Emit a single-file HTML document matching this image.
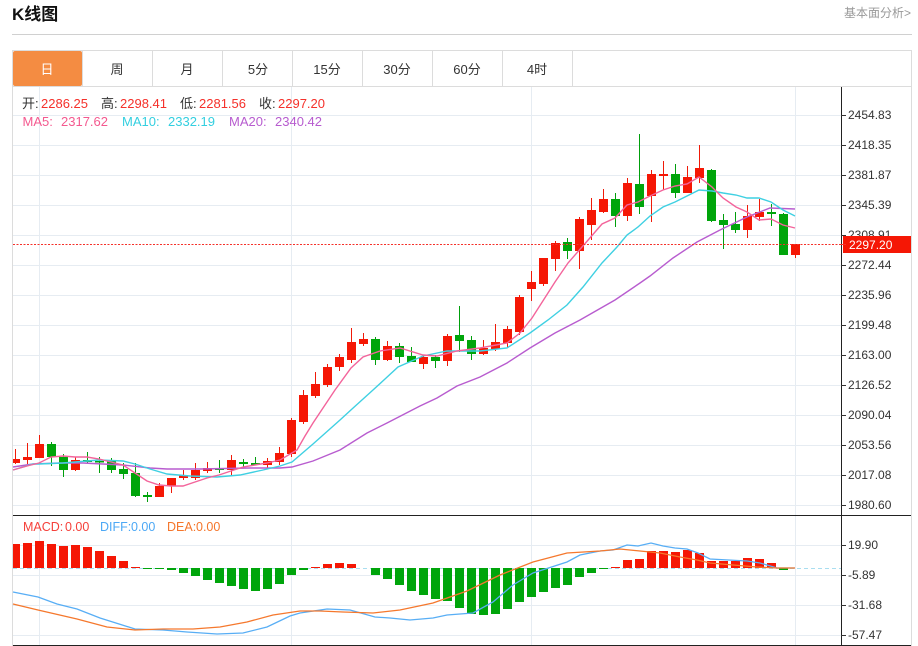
<!DOCTYPE html>
<html><head><meta charset="utf-8"><title>K线图</title>
<style>
html,body{margin:0;padding:0;background:#fff;width:918px;height:646px;overflow:hidden}
svg{position:absolute;left:0;top:0;display:block}
text{font-family:"Liberation Sans","Noto Sans CJK SC",sans-serif}
</style></head><body>
<svg width="918" height="646" viewBox="0 0 918 646" xmlns="http://www.w3.org/2000/svg">
<text x="12" y="20" font-size="17" font-weight="700" fill="#111">K线图</text>
<text x="911" y="17" font-size="12" fill="#999" text-anchor="end">基本面分析&gt;</text>
<path d="M12 34.500H912" stroke="#d0d0d0" fill="none"/>

<path d="M12.500 50V646M911.500 50V646M12 50.500H912M12 86.500H912M82.500 51V86M152.500 51V86M222.500 51V86M292.500 51V86M362.500 51V86M432.500 51V86M502.500 51V86M572.500 51V86" stroke="#dcdcdc" fill="none"/>
<rect x="13" y="51" width="69" height="35" rx="2" fill="#f48c42"/>
<g font-size="13" text-anchor="middle" fill="#333">
<text x="47" y="74" fill="#fff">日</text><text x="117" y="74">周</text><text x="187" y="74">月</text><text x="258" y="74">5分</text><text x="327" y="74">15分</text><text x="397" y="74">30分</text><text x="467" y="74">60分</text><text x="537" y="74">4时</text>
</g>

<path d="M13 115.500H841M13 145.500H841M13 175.500H841M13 205.500H841M13 235.500H841M13 265.500H841M13 295.500H841M13 325.500H841M13 355.500H841M13 385.500H841M13 415.500H841M13 445.500H841M13 475.500H841M13 505.500H841M13 545.500H841M13 575.500H841M13 605.500H841M13 635.500H841M39.500 87V645M291.500 87V645M531.500 87V645M795.500 87V645" stroke="#e6ecf2" fill="none"/>

<g font-size="13">
<text x="22" y="108" fill="#333">开:</text><text x="41" y="108" fill="#f5302a">2286.25</text>
<text x="101" y="108" fill="#333">高:</text><text x="120" y="108" fill="#f5302a">2298.41</text>
<text x="180" y="108" fill="#333">低:</text><text x="199" y="108" fill="#f5302a">2281.56</text>
<text x="259" y="108" fill="#333">收:</text><text x="278" y="108" fill="#f5302a">2297.20</text>
<text x="22.500" y="126" fill="#f4598f">MA5:</text><text x="61" y="126" fill="#f4598f">2317.62</text>
<text x="122" y="126" fill="#33cfe0">MA10:</text><text x="168" y="126" fill="#33cfe0">2332.19</text>
<text x="229" y="126" fill="#b75ccf">MA20:</text><text x="275" y="126" fill="#b75ccf">2340.42</text>
<text x="23" y="531" font-size="12.500" fill="#f5403a">MACD:</text><text x="65" y="531" font-size="12.500" fill="#f5403a">0.00</text>
<text x="100" y="531" font-size="12.500" fill="#4ca8f5">DIFF:</text><text x="131" y="531" font-size="12.500" fill="#4ca8f5">0.00</text>
<text x="167" y="531" font-size="12.500" fill="#f5762b">DEA:</text><text x="196" y="531" font-size="12.500" fill="#f5762b">0.00</text>
</g>

<!-- red wicks -->
<path fill="none" stroke="#f01a08" d="M15.500 449V464M27.500 443V464M39.500 435V458M75.500 457V471M159.500 483V497M171.500 478V493M183.500 470V480M195.500 463V480M207.500 462V473M231.500 455V476M267.500 458V469M279.500 447V465M291.500 418V457M303.500 390V424M315.500 372V398M327.500 364V387M339.500 354V371M351.500 328V363M363.500 333V346M387.500 341V361M423.500 355V369M447.500 334V366M483.500 340V355M495.500 324V351M507.500 326V347M519.500 295V335M531.500 271V301M543.500 258V286M555.500 241V271M579.500 217V269M591.500 198V240M603.500 189V213M627.500 178V221M651.500 170V222M663.500 161V190M687.500 166V193M699.500 145V183M747.500 205V238M759.500 199V221M795.500 244V258"/>
<!-- green wicks -->
<path fill="none" stroke="#009f0c" d="M51.500 442V466M63.500 454V477M87.500 452V463M99.500 457V473M111.500 458V473M123.500 463V479M135.500 463V497M147.500 492V502M219.500 460V473M243.500 459V468M255.500 457V465M375.500 337V365M399.500 343V363M411.500 347V362M435.500 355V368M459.500 306V352M471.500 336V360M567.500 238V259M615.500 193V227M639.500 134V214M675.500 164V198M711.500 169V222M723.500 214V249M735.500 212V233M771.500 204V226M783.500 213V255"/>
<!-- red bodies -->
<path fill="#f51705" d="M13 459h7v4h-7zM23 457h9v3h-9zM35 444h9v14h-9zM71 460h9v10h-9zM155 486h9v11h-9zM167 478h9v8h-9zM179 475h9v3h-9zM191 470h9v8h-9zM203 468h9v3h-9zM227 460h9v10h-9zM263 461h9v4h-9zM275 453h9v9h-9zM287 420h9v34h-9zM299 395h9v27h-9zM311 384h9v12h-9zM323 367h9v18h-9zM335 357h9v10h-9zM347 342h9v18h-9zM359 339h9v5h-9zM383 346h9v14h-9zM419 357h9v7h-9zM443 336h9v25h-9zM479 348h9v6h-9zM491 342h9v7h-9zM503 329h9v14h-9zM515 297h9v35h-9zM527 282h9v7h-9zM539 258h9v26h-9zM551 243h9v16h-9zM575 219h9v32h-9zM587 210h9v15h-9zM599 199h9v13h-9zM623 183h9v33h-9zM647 174h9v22h-9zM659 174h9v2h-9zM683 177h9v16h-9zM695 168h9v10h-9zM743 216h9v14h-9zM755 212h9v5h-9zM791 244h9v11h-9z"/>
<!-- green bodies -->
<path fill="#00a50b" d="M47 444h9v13h-9zM59 457h9v13h-9zM83 460h9v2h-9zM95 461h9v1.500h-9zM107 461h9v9h-9zM119 469h9v5h-9zM131 473h9v23h-9zM143 495h9v2h-9zM215 468h9v2h-9zM239 462h9v2h-9zM251 463h9v2h-9zM371 339h9v21h-9zM395 346h9v11h-9zM407 356h9v6h-9zM431 357h9v4h-9zM455 335h9v6h-9zM467 340h9v14h-9zM563 242h9v9h-9zM611 199h9v17h-9zM635 184h9v23h-9zM671 174h9v19h-9zM707 170h9v51h-9zM719 220h9v5h-9zM731 224h9v6h-9zM767 212h9v2h-9zM779 214h9v41h-9z"/>

<!-- MA20 -->
<polyline fill="none" stroke="#b85ccf" stroke-width="1.400" points="13,467 33,464 60,463 83,463 123,465 150,468 167,469 200,469 250,468 280,468 292,467 313,461 340,450 367,433 387,423 420,406 437,398 457,386 480,377 507,363 530,348 555,333 580,320 615,300 640,283 650,276 673,258 697,242 720,230 747,217 770,208 795,209"/>
<!-- MA10 -->
<polyline fill="none" stroke="#3fd0e2" stroke-width="1.400" points="13,470 33,464 39,464 63,463 99,460 123,461 135,464 150,469 167,474 190,476 217,477 240,475 263,470 280,466 292,462 313,444 340,420 352,409 373,390 385,379 398,367 423,356 447,351 480,351 507,348 530,333 548,320 567,305 583,287 602,263 617,247 627,235 638,227 650,216 663,207 675,202 687,196 699,190 712,191 723,193 736,195 747,198 759,198 771,202 783,210 795,216"/>
<!-- MA5 -->
<polyline fill="none" stroke="#f3649b" stroke-width="1.400" points="13,470 27,466 39,463 51,457 63,456 75,457 87,457 99,459 111,462 123,465 135,473 147,481 159,485 171,486 183,486 195,482 207,478 219,475 231,471 243,467 255,465 267,463 280,460 297,450 305,436 313,423 335,390 351,368 363,357 380,351 400,348 423,355 437,356 457,351 480,348 507,343 520,333 532,318 555,282 568,263 589,239 602,224 615,218 627,205 638,202 650,196 663,190 675,186 687,184 699,177 712,187 723,198 736,207 747,212 759,220 771,219 783,225 795,228"/>

<!-- price line -->
<path d="M13 244.500H841" stroke="#f5302a" stroke-dasharray="2 1.500" fill="none"/>

<!-- MACD zero -->
<path d="M13 568.500H841" stroke="#a9def0" stroke-dasharray="4 3" fill="none"/>
<!-- MACD red -->
<path fill="#f51705" d="M13 544h7v24h-7zM23 543h9v25h-9zM35 541h9v27h-9zM47 544h9v24h-9zM59 546h9v22h-9zM71 545h9v23h-9zM83 547h9v21h-9zM95 551h9v17h-9zM107 556h9v12h-9zM119 561h9v7h-9zM131 567h9v1h-9zM311 567h9v1h-9zM323 564h9v4h-9zM335 563h9v5h-9zM347 564h9v4h-9zM611 567h9v1h-9zM623 560h9v8h-9zM635 559h9v9h-9zM647 551h9v17h-9zM659 551h9v17h-9zM671 552h9v16h-9zM683 550h9v18h-9zM695 553h9v15h-9zM707 561h9v7h-9zM719 561h9v7h-9zM731 561h9v7h-9zM743 558h9v10h-9zM755 559h9v9h-9zM767 563h9v5h-9z"/>
<!-- MACD green -->
<path fill="#00a50b" d="M143 568h9v1h-9zM155 568h9v1h-9zM167 568h9v2h-9zM179 568h9v5h-9zM191 568h9v8h-9zM203 568h9v12h-9zM215 568h9v15h-9zM227 568h9v18h-9zM239 568h9v21h-9zM251 568h9v23h-9zM263 568h9v21h-9zM275 568h9v16h-9zM287 568h9v7h-9zM299 568h9v2h-9zM371 568h9v7h-9zM383 568h9v11h-9zM395 568h9v17h-9zM407 568h9v23h-9zM419 568h9v27h-9zM431 568h9v31h-9zM443 568h9v33h-9zM455 568h9v40h-9zM467 568h9v46h-9zM479 568h9v47h-9zM491 568h9v46h-9zM503 568h9v41h-9zM515 568h9v34h-9zM527 568h9v29h-9zM539 568h9v24h-9zM551 568h9v20h-9zM563 568h9v17h-9zM575 568h9v9h-9zM587 568h9v5h-9zM599 568h9v1h-9zM779 568h9v2h-9z"/>
<!-- DIFF -->
<polyline fill="none" stroke="#58aef5" stroke-width="1.300" points="13,592 38,597 57,604 77,609 100,618 135,629 163,630 187,632 217,634 243,633 267,627 290,616 300,613 327,609 350,610 375,617 390,618 410,620 433,618 447,615 473,613 493,602 513,585 533,573 567,562 580,555 600,551 613,550 627,545 638,546 651,543 663,546 675,548 687,549 698,553 710,559 747,561 760,563 777,568 795,568"/>
<!-- DEA -->
<polyline fill="none" stroke="#f5782d" stroke-width="1.300" points="13,604 38,610 77,619 107,627 135,630 163,629 193,629 220,627 247,622 273,615 300,611 320,611 343,612 373,613 400,610 433,603 467,591 500,575 533,562 567,553 600,551 620,549 640,551 660,553 680,557 697,560 710,563 733,565 757,567 777,568 795,568"/>

<!-- axes -->
<path d="M13 515.500H911M13 645.500H911M841.500 87V646" stroke="#222" fill="none"/>
<path d="M841 115.500h5M841 145.500h5M841 175.500h5M841 205.500h5M841 235.500h5M841 265.500h5M841 295.500h5M841 325.500h5M841 355.500h5M841 385.500h5M841 415.500h5M841 445.500h5M841 475.500h5M841 505.500h5M841 545.500h5M841 575.500h5M841 605.500h5M841 635.500h5" stroke="#333" fill="none"/>
<g font-size="12" fill="#333">
<text x="848" y="119">2454.83</text><text x="848" y="149">2418.35</text><text x="848" y="179">2381.87</text><text x="848" y="209">2345.39</text><text x="848" y="239">2308.91</text><text x="848" y="269">2272.44</text><text x="848" y="299">2235.96</text><text x="848" y="329">2199.48</text><text x="848" y="359">2163.00</text><text x="848" y="389">2126.52</text><text x="848" y="419">2090.04</text><text x="848" y="449">2053.56</text><text x="848" y="479">2017.08</text><text x="848" y="509">1980.60</text>
<text x="848" y="549">19.90</text><text x="848" y="579">-5.89</text><text x="848" y="609">-31.68</text><text x="848" y="639">-57.47</text>
</g>
<rect x="843" y="236" width="68" height="17" fill="#f51705"/>
<path d="M841 244.500h5" stroke="#f5302a" fill="none"/>
<text x="849" y="249" font-size="12" fill="#fff">2297.20</text>
</svg>
</body></html>
